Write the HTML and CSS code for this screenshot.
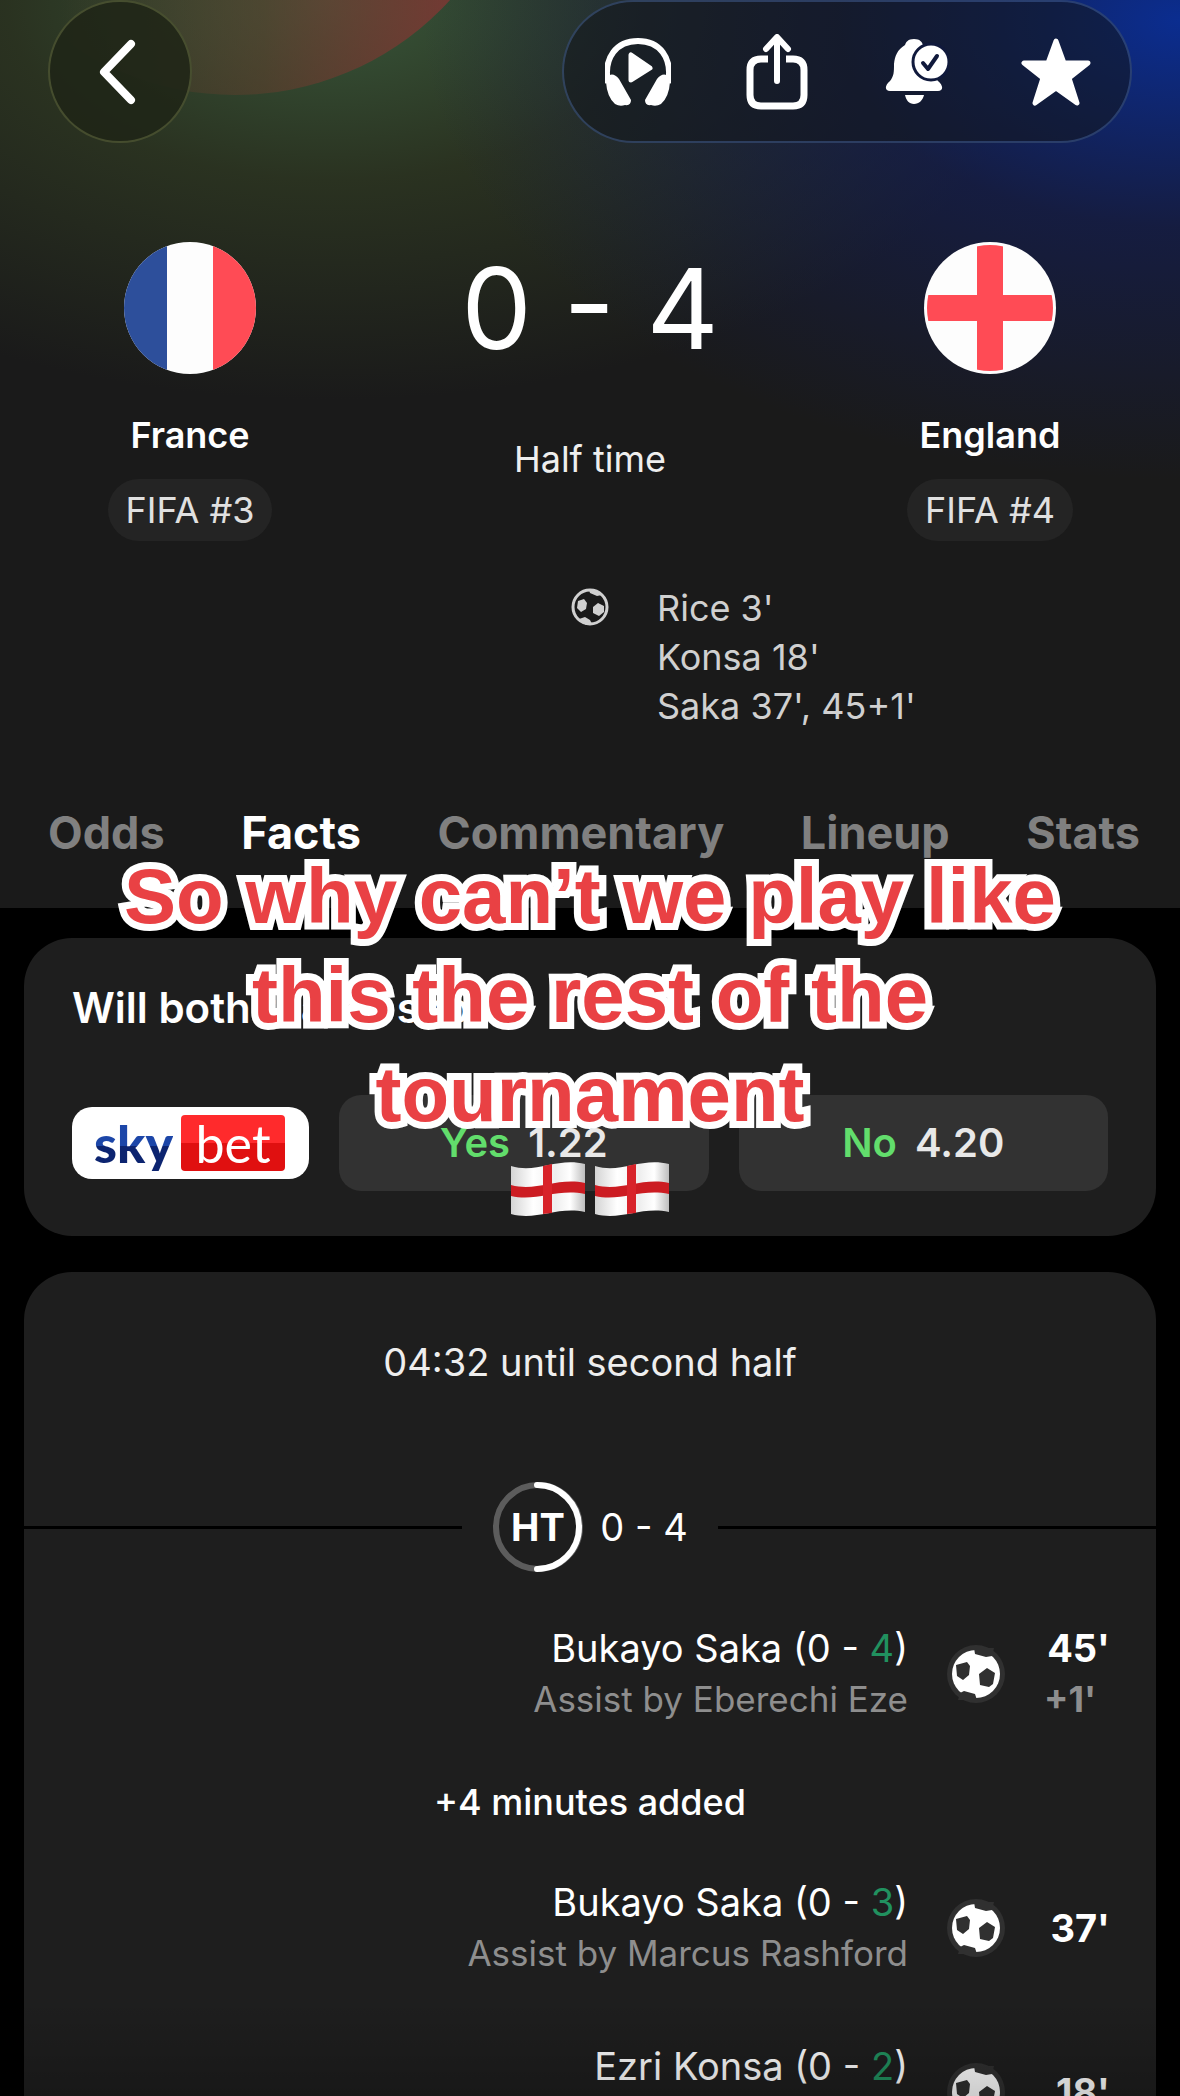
FILE: index.html
```html
<!doctype html>
<html lang="en">
<head>
<meta charset="utf-8">
<meta name="viewport" content="width=device-width, initial-scale=1">
<title>France - England</title>
<link rel="stylesheet" href="styles.css">
</head>
<body>

<svg class="defs" aria-hidden="true">
	<symbol id="ball" viewBox="0 0 60 60">
		<circle cx="30" cy="30" r="29" fill="#303030"/>
		<circle cx="30" cy="30" r="24" fill="#fff"/>
		<path fill="#303030" d="M10 21l11-3 3 4-1 9-6 5-6-4zM33 30l8-6 8 5-2 11-4 3-9-2zM28 4l1 6 11 3 6-1 2-8zM31 56l-2-6-11-3-4 2-2 7z"/>
	</symbol>
</svg>

<header class="match-header">
	<div class="toolbar">
		<button class="glass back" aria-label="Back">
			<svg width="40" height="68" viewBox="0 0 40 68"><path d="M33 6L6 34l27 28" fill="none" stroke="#fff" stroke-width="8" stroke-linecap="round" stroke-linejoin="round"/></svg>
		</button>
		<div class="glass actions">
			<button aria-label="Listen">
				<svg width="66" height="70" viewBox="0 0 66 70">
					<path d="M3 46C-2 20 12 4 33 4s35 16 30 42" fill="none" stroke="#fff" stroke-width="6"/>
					<path d="M1 40q7-6 13 2l12 21q0 6-6 5-5 2-10-1-8-7-9-22zM65 40q-7-6-13 2L40 63q0 6 6 5 5 2 10-1 8-7 9-22z" fill="#fff"/>
					<path d="M26 18v25l19-12z" fill="#fff" stroke="#fff" stroke-width="5" stroke-linejoin="round"/>
				</svg>
			</button>
			<button aria-label="Share">
				<svg width="62" height="76" viewBox="0 0 62 76">
					<path d="M22 25h-7q-11 0-11 11v25q0 11 11 11h32q11 0 11-11V36q0-11-11-11h-7" fill="none" stroke="#fff" stroke-width="7"/>
					<path d="M31 47V4M20 15L31 3l11 12" fill="none" stroke="#fff" stroke-width="6" stroke-linecap="round" stroke-linejoin="round"/>
				</svg>
			</button>
			<button aria-label="Notifications">
				<svg width="64" height="68" viewBox="0 0 64 68">
					<path d="M29 1c-6 0-8 3-9 6-8 5-10 11-11 19 0 8 0 12-4 17-6 5-5 10 0 10h48c5 0 6-5 0-10-4-5-4-9-4-17-1-8-3-14-11-19-1-3-3-6-9-6zM20 57h19c-1 5-5 9-10 9s-8-4-9-9z" fill="#fff"/>
					<circle cx="46" cy="24" r="18" fill="#fff" stroke="#10193c" stroke-width="3"/>
					<path d="M38 25l5 6 9-13" fill="none" stroke="#10193c" stroke-width="4" stroke-linecap="round" stroke-linejoin="round"/>
				</svg>
			</button>
			<button aria-label="Favourite">
				<svg width="70" height="68" viewBox="0 0 70 68"><path d="M35 3l8 22h24L48 40l8 25-21-15-21 15 8-25L3 25h24z" fill="#fff" stroke="#fff" stroke-width="5" stroke-linejoin="round"/></svg>
			</button>
		</div>
	</div>

	<div class="scoreboard">
		<div class="team">
			<svg class="flag" viewBox="0 0 132 132">
				<clipPath id="round"><circle cx="66" cy="66" r="66"/></clipPath>
				<g clip-path="url(#round)">
					<rect width="132" height="132" fill="#fdfdfd"/>
					<rect width="43" height="132" fill="#2d4f9b"/>
					<rect x="89" width="43" height="132" fill="#ff4b55"/>
				</g>
			</svg>
			<h2>France</h2>
			<span class="rank">FIFA #3</span>
		</div>
		<div class="score">
			<h1>0 - 4</h1>
			<p>Half time</p>
		</div>
		<div class="team">
			<svg class="flag" viewBox="0 0 132 132">
				<circle cx="66" cy="66" r="66" fill="#fdfdfd"/>
				<clipPath id="inner"><circle cx="66" cy="66" r="63"/></clipPath>
				<path d="M53 0h26v53h53v26H79v53H53V79H0V53h53z" fill="#ff4b55" clip-path="url(#inner)"/>
			</svg>
			<h2>England</h2>
			<span class="rank">FIFA #4</span>
		</div>
	</div>

	<div class="scorers">
		<svg width="40" height="40" viewBox="0 0 40 40">
			<circle cx="20" cy="20" r="17" fill="none" stroke="#d0d0d0" stroke-width="3"/>
			<path fill="#d0d0d0" d="M8 14l6-2 3 4-1 6-5 3-4-4zM28 16l6 3v6l-5 4-6-3v-6zM19 3l11 2 2 3-5 1-7-3zM9 32l6-2 5 3 2 4-6 1z"/>
		</svg>
		<ul>
			<li>Rice 3'</li>
			<li>Konsa 18'</li>
			<li>Saka 37', 45+1'</li>
		</ul>
	</div>

	<nav class="tabs">
		<a href="#odds">Odds</a>
		<a href="#facts" class="active">Facts</a>
		<a href="#commentary">Commentary</a>
		<a href="#lineup">Lineup</a>
		<a href="#stats">Stats</a>
	</nav>
</header>

<main>
	<section class="card odds">
		<h3>Will both teams score?</h3>
		<div class="odds-row">
			<div class="bookmaker"><span class="sky">sky</span><span class="bet">bet</span></div>
			<button class="odd"><span>Yes</span> 1.22</button>
			<button class="odd"><span>No</span> 4.20</button>
		</div>
	</section>

	<section class="card events">
		<p class="countdown">04:32 until second half</p>
		<div class="period">
			<svg width="92" height="92" viewBox="0 0 92 92">
				<circle cx="46" cy="46" r="42" fill="none" stroke="#5c5c5c" stroke-width="6"/>
				<path d="M45 4a42 42 0 0 1 0 84" fill="none" stroke="#fff" stroke-width="6" stroke-linecap="round"/>
				<text x="46" y="60" class="ht">HT</text>
			</svg>
			<span>0 - 4</span>
		</div>
		<div class="event">
			<div class="who">
				<p>Bukayo Saka (0 - <b>4</b>)</p>
				<small>Assist by Eberechi Eze</small>
			</div>
			<svg class="ball"><use href="#ball"/></svg>
			<div class="time">45'<small>+1'</small></div>
		</div>
		<p class="added">+4 minutes added</p>
		<div class="event">
			<div class="who">
				<p>Bukayo Saka (0 - <b>3</b>)</p>
				<small>Assist by Marcus Rashford</small>
			</div>
			<svg class="ball"><use href="#ball"/></svg>
			<div class="time">37'</div>
		</div>
		<div class="event">
			<div class="who">
				<p>Ezri Konsa (0 - <b>2</b>)</p>
			</div>
			<svg class="ball"><use href="#ball"/></svg>
			<div class="time">18'</div>
		</div>
	</section>
</main>

<div class="caption">
	<p>So why can’t we play like<br>this the rest of the<br>tournament</p>
	<div class="emoji">
		<svg viewBox="0 0 76 54"><use href="#wave"/></svg>
		<svg viewBox="0 0 76 54"><use href="#wave"/></svg>
	</div>
</div>

<svg class="defs" aria-hidden="true">
	<linearGradient id="cloth">
		<stop offset="0" stop-color="#d4d4d4"/>
		<stop offset=".3" stop-color="#fff"/>
		<stop offset=".6" stop-color="#eee"/>
		<stop offset=".8" stop-color="#fff"/>
		<stop offset="1" stop-color="#bdbdbd"/>
	</linearGradient>
	<symbol id="wave" viewBox="0 0 76 54">
		<path d="M1 4c26 8 46-9 74-2v48c-28-6-48 9-74 2z" fill="url(#cloth)"/>
		<path d="M1 23c26 7 46-8 74-2v11c-28-6-48 8-74 2z" fill="#cc1c22"/>
		<path d="M33 4l9-2v49l-9 1z" fill="#d8232a"/>
	</symbol>
</svg>

</body>
</html>
```
FILE: styles.css
```css
* {
	box-sizing: border-box;
}

body {
	margin: 0;
	height: 100vh;
	overflow: hidden;
	position: relative;
	background: #000;
	color: #fff;
	font-family: Inter, "Liberation Sans", sans-serif;
	font-size: 38px;
	line-height: 50px;
}

/* the last event fades out at the bottom edge */
body::after {
	content: "";
	position: absolute;
	left: 0;
	right: 0;
	bottom: 0;
	height: 96px;
	background: linear-gradient(transparent, rgba(0, 0, 0, 0.2));
}

h1, h2, h3, p, ul {
	margin: 0;
	padding: 0;
	list-style: none;
}

button {
	border: 0;
	padding: 0;
	background: none;
	color: inherit;
	font: inherit;
}

svg {
	display: block;
	flex: none;
}

.defs {
	position: absolute;
	width: 0;
	height: 0;
}

.match-header {
	position: relative;
	overflow: hidden;
	padding-bottom: 50px;
	background:
		radial-gradient(ellipse 760px 460px at 1180px 20px, rgba(10, 46, 150, 0.95), rgba(18, 30, 90, 0.6) 45%, transparent),
		radial-gradient(ellipse 720px 400px at 330px 0, #38563a, rgba(46, 56, 34, 0.8) 45%, transparent),
		#1a1a1a;
}

/* red spotlight behind the toolbar, stronger on its right side */
.match-header::before {
	content: "";
	position: absolute;
	top: -487px;
	left: -56px;
	width: 582px;
	height: 582px;
	border-radius: 50%;
	background: linear-gradient(to right, transparent 20%, rgba(100, 62, 45, 0.5) 55%, rgba(130, 55, 52, 0.85) 90%);
}

.toolbar {
	position: relative;
	display: flex;
	justify-content: space-between;
	padding: 0 48px;
}

.glass {
	height: 143px;
	border: 2px solid rgba(90, 130, 200, 0.35);
	border-radius: 72px;
	background: rgba(18, 22, 28, 0.55);
}

.back {
	display: flex;
	align-items: center;
	justify-content: center;
	width: 144px;
	padding-right: 4px;
	border-color: rgba(140, 150, 90, 0.35);
	background: rgba(30, 36, 22, 0.85);
}

.actions {
	display: grid;
	grid-template-columns: repeat(4, 1fr);
	width: 570px;
	padding: 0 4px;
}

.actions button {
	display: flex;
	align-items: center;
	justify-content: center;
}

.scoreboard {
	display: flex;
	justify-content: space-between;
	padding: 99px 90px 0;
}

.team {
	display: flex;
	flex-direction: column;
	align-items: center;
	width: 200px;
}

.flag {
	width: 132px;
	height: 132px;
}

.team h2 {
	margin-top: 36px;
	font-size: 36px;
	font-weight: 600;
}

.rank {
	margin-top: 19px;
	padding: 6px 18px;
	border-radius: 31px;
	background: #242424;
	color: #e0e0e0;
	font-size: 36px;
}

.score {
	text-align: center;
}

.score h1 {
	margin-top: 6px;
	font-size: 112px;
	font-weight: 400;
	line-height: 120px;
}

.score p {
	margin-top: 66px;
	font-size: 36px;
	color: #eee;
}

.scorers {
	display: grid;
	grid-template-columns: 1fr 40px 1fr;
	column-gap: 47px;
	margin-top: 43px;
	color: #d0d0d0;
	font-size: 36px;
	line-height: 49px;
}

.scorers svg {
	grid-column: 2;
	margin-top: 3px;
}

.tabs {
	display: flex;
	justify-content: space-between;
	margin-top: 77px;
	padding: 0 40px 0 48px;
}

.tabs a {
	color: #808080;
	font-size: 45px;
	font-weight: 700;
	text-decoration: none;
}

.tabs a.active {
	color: #fff;
}

main {
	display: flex;
	flex-direction: column;
	gap: 36px;
	padding: 30px 24px 0;
}

.card {
	border-radius: 48px;
	background: #1e1e1e;
}

.odds {
	padding: 45px 48px;
}

.odds h3 {
	font-size: 42px;
	font-weight: 600;
}

.odds-row {
	display: flex;
	align-items: center;
	gap: 30px;
	margin-top: 62px;
}

.bookmaker {
	display: flex;
	align-items: center;
	gap: 8px;
	width: 237px;
	height: 72px;
	padding: 0 24px 0 22px;
	border-radius: 20px;
	background: #fff;
	font-family: Lato, sans-serif;
	font-size: 52px;
	line-height: 56px;
}

.sky {
	background: linear-gradient(#1c46a8 55%, #0c2470 55%);
	background-clip: text;
	color: transparent;
	font-weight: 900;
}

.bet {
	flex: 1;
	border-radius: 4px;
	background: linear-gradient(#ff2a2c 50%, #e01010 50%);
	text-align: center;
}

.odd {
	flex: 1;
	height: 96px;
	border-radius: 22px;
	background: #323232;
	color: #e8e8e8;
	font-size: 40px;
	font-weight: 600;
}

.odd span {
	margin-right: 8px;
	color: #62dd6c;
}

.events {
	padding-top: 65px;
}

.countdown {
	text-align: center;
	color: #eee;
}

.period {
	display: flex;
	align-items: center;
	justify-content: center;
	gap: 16px;
	margin-top: 94px;
}

.period::before, .period::after {
	content: "";
	flex: 1;
	height: 3px;
	background: #000;
}

.period::before {
	margin-right: 14px;
}

.period::after {
	margin-left: 14px;
}

.ht {
	fill: #fff;
	font-size: 38px;
	font-weight: 700;
	text-anchor: middle;
}

.event {
	display: grid;
	grid-template-columns: 1fr 60px 66px;
	align-items: center;
	column-gap: 38px;
	height: 102px;
	margin: 50px 46px 0 0;
}

.event + .event {
	margin-top: 62px;
}

.who {
	align-self: start;
	text-align: right;
}

.who b {
	color: #21915f;
	font-weight: 400;
}

small {
	display: block;
	color: #8e8e8e;
	font-size: 36px;
	line-height: 52px;
}

.who small {
	font-size: 35px;
}

.ball {
	width: 60px;
	height: 60px;
}

.time {
	text-align: right;
	font-weight: 700;
}

.time small {
	text-align: left;
}

.added {
	margin-top: 52px;
	text-align: center;
	font-size: 36px;
	font-weight: 500;
}

.caption {
	position: absolute;
	top: 847px;
	left: 0;
	right: 0;
	text-align: center;
}

.caption p {
	color: #e94144;
	font-family: "Liberation Sans", Arial, sans-serif;
	font-size: 78px;
	font-weight: 700;
	line-height: 99px;
	-webkit-text-stroke: 14px #fff;
	paint-order: stroke fill;
	stroke-linejoin: round;
}

.emoji {
	display: flex;
	justify-content: center;
	gap: 8px;
	margin-top: 18px;
}

.emoji svg {
	width: 76px;
	height: 54px;
}
```
